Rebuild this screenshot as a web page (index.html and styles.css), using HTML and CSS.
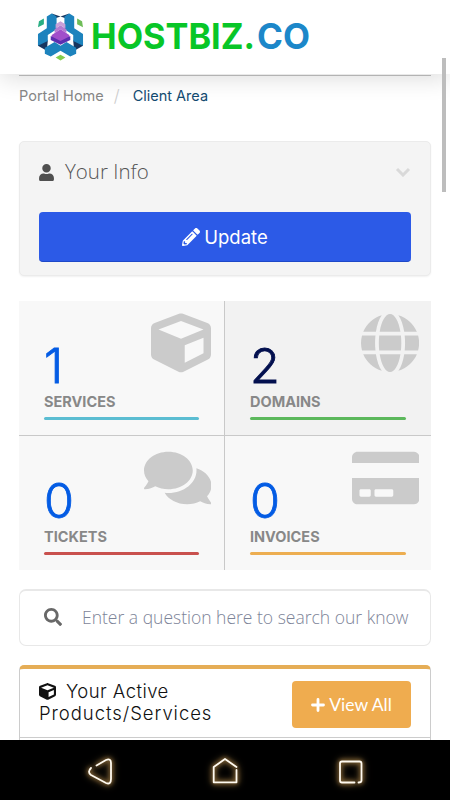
FILE: index.html
```html
<!DOCTYPE html>
<html lang="en">
<head>
<meta charset="utf-8">
<meta name="viewport" content="width=device-width, initial-scale=1">
<title>Client Area</title>
<link rel="stylesheet" href="styles.css">
</head>
<body>
<div class="screen">
  <header class="topbar">
    <svg class="mark" viewBox="0 0 48 50">
      <path fill="#17365f" d="M15 1l9 3 9-3-3 5-6-2-6 2zM1 29l8-4 2 4-1 10-9-5zM47 29l-8-4-2 4 1 10 9-5z"/>
      <path fill="#1d83bd" d="M15 1l5 3v13l-9 6v6l-10 5V22l9-6V4zM33 1l-5 3v13l9 6v6l10 5V22l-9-6V4zM8 36l10-6 6 4 6-4 10 6v6l-6 3-10-6-10 6-6-3z"/>
      <path fill="#c9a0d8" d="M24 9l5 3v4l-5-3-5 3v-4z"/>
      <path fill="#b57bd0" d="M24 13l6 4v4l-6-4-6 4v-4z"/>
      <path fill="#a14fca" d="M24 17l9 6v3l-9 5-9-5v-3z"/>
      <path fill="#5c2fb0" d="M14 24l10 5 10-5v4l-10 5-10-5z"/>
      <path fill="#29af83" d="M2 9l5-3v6l-6 3z"/>
      <path fill="#6fbd59" d="M41 6l5 3 1 6-6-3z"/>
      <path fill="#83cc4d" d="M24 43l5 3-5 3-5-3z"/>
    </svg>
    <svg class="wordmark" viewBox="0 0 220 40">
      <text class="word-host" x="-1" y="29" textLength="164" lengthAdjust="spacingAndGlyphs">HOSTBIZ.</text>
      <text class="word-co" x="165" y="29" textLength="53" lengthAdjust="spacingAndGlyphs">CO</text>
    </svg>
  </header>

  <main class="content">
    <nav class="crumbs">
      <span class="crumb">Portal Home</span><span class="sep">/</span><span class="crumb current">Client Area</span>
    </nav>

    <section class="info">
      <div class="info-head">
        <svg class="user" viewBox="0 0 448 512"><path d="M224 256c70.7 0 128-57.3 128-128S294.700 0 224 0 96 57.300 96 128s57.300 128 128 128zm89.600 32h-16.700c-22.200 10.200-46.900 16-72.900 16s-50.600-5.800-72.900-16h-16.700C60.200 288 0 348.200 0 422.400V464c0 26.500 21.500 48 48 48h352c26.500 0 48-21.500 48-48v-41.600c0-74.200-60.200-134.400-134.400-134.400z"/></svg>
        <h2>Your Info</h2>
        <svg class="chevron" viewBox="0 0 16 10"><path d="M2 2l6 6 6-6"/></svg>
      </div>
      <button class="update">
        <svg class="pencil" viewBox="0 0 512 512"><path d="M497.900 142.100l-46.100 46.100c-4.700 4.700-12.300 4.700-17 0l-111-111c-4.700-4.700-4.700-12.300 0-17l46.100-46.100c18.700-18.700 49.100-18.700 67.900 0l60.100 60.100c18.800 18.700 18.800 49.100 0 67.900zM284.200 99.800L21.600 362.400.4 483.900c-2.900 16.400 11.400 30.600 27.800 27.800l121.500-21.300 262.600-262.600c4.700-4.700 4.700-12.300 0-17l-111-111c-4.800-4.700-12.400-4.700-17.100 0zM124.100 339.900c-5.500-5.500-5.500-14.300 0-19.800l154-154c5.500-5.500 14.300-5.500 19.800 0s5.500 14.300 0 19.800l-154 154c-5.500 5.500-14.300 5.500-19.800 0zM88 424h48v36.300l-64.500 11.300-31.100-31.100L51.700 376H88v48z"/></svg>
        <span>Update</span>
      </button>
    </section>

    <section class="tiles">
      <div class="tile services">
        <svg viewBox="0 0 512 512"><path d="M239.100 6.300l-208 78c-18.700 7-31.100 25-31.100 45v225.100c0 18.200 10.300 34.800 26.500 42.900l208 104c13.500 6.800 29.400 6.800 42.900 0l208-104c16.300-8.100 26.500-24.800 26.500-42.900V129.300c0-20-12.400-37.900-31.100-44.900l-208-78C262 2.200 250 2.200 239.100 6.300zM256 68.400l192 72v1.100l-192 78-192-78v-1.100l192-72zm32 356V275.500l160-65v133.900l-160 80z"/></svg>
        <div class="count">1</div><div class="label">SERVICES</div><div class="bar"></div>
      </div>
      <div class="tile domains">
        <svg viewBox="0 0 496 512"><path d="M336.500 160C322 70.700 287.800 8 248 8s-74 62.700-88.500 152h177zM152 256c0 22.200 1.200 43.500 3.300 64h185.300c2.100-20.500 3.300-41.800 3.300-64s-1.200-43.500-3.300-64H155.300c-2.100 20.500-3.300 41.800-3.300 64zm324.700-96c-28.600-67.900-86.500-120.400-158-141.600 24.400 33.800 41.200 84.700 50 141.600h108zM177.200 18.400C105.800 39.600 47.800 92.100 19.300 160h108c8.700-56.900 25.500-107.800 49.900-141.600zM487.400 192H372.700c2.100 21 3.300 42.500 3.300 64s-1.200 43-3.300 64h114.600c5.500-20.500 8.600-41.800 8.600-64s-3.100-43.500-8.500-64zM120 256c0-21.500 1.200-43 3.300-64H8.600C3.200 212.500 0 233.800 0 256s3.200 43.500 8.600 64h114.600c-2-21-3.200-42.500-3.200-64zm39.500 96c14.500 89.300 48.700 152 88.500 152s74-62.700 88.500-152h-177zm159.300 141.600c71.400-21.200 129.400-73.700 158-141.600h-108c-8.800 56.900-25.600 107.800-50 141.600zM19.300 352c28.600 67.900 86.500 120.400 158 141.600-24.400-33.800-41.200-84.700-50-141.600h-108z"/></svg>
        <div class="count">2</div><div class="label">DOMAINS</div><div class="bar"></div>
      </div>
      <div class="tile tickets">
        <svg viewBox="0 0 576 512"><path d="M416 192c0-88.400-93.100-160-208-160S0 103.600 0 192c0 34.300 14.100 65.900 38 92-13.400 30.200-35.500 54.200-35.800 54.500-2.200 2.300-2.800 5.700-1.500 8.700S4.800 352 8 352c36.600 0 66.900-12.300 88.700-25 32.200 15.700 70.300 25 111.300 25 114.900 0 208-71.600 208-160zm122 220c23.900-26 38-57.700 38-92 0-66.900-53.500-124.200-129.300-148.100.9 6.600 1.300 13.300 1.300 20.100 0 105.900-107.700 192-240 192-10.800 0-21.300-.8-31.700-1.900C207.800 439.600 281.800 480 368 480c41 0 79.100-9.200 111.300-25 21.800 12.700 52.100 25 88.700 25 3.200 0 6.100-1.900 7.300-4.800 1.300-2.900.7-6.300-1.500-8.700-.3-.3-22.400-24.200-35.800-54.500z"/></svg>
        <div class="count">0</div><div class="label">TICKETS</div><div class="bar"></div>
      </div>
      <div class="tile invoices">
        <svg viewBox="0 0 576 512"><path d="M0 432c0 26.500 21.500 48 48 48h480c26.500 0 48-21.500 48-48V256H0v176zm192-68c0-6.600 5.400-12 12-12h136c6.600 0 12 5.400 12 12v40c0 6.600-5.400 12-12 12H204c-6.600 0-12-5.400-12-12v-40zm-128 0c0-6.600 5.400-12 12-12h72c6.600 0 12 5.400 12 12v40c0 6.600-5.400 12-12 12H76c-6.600 0-12-5.400-12-12v-40zM576 80v48H0V80c0-26.500 21.500-48 48-48h480c26.500 0 48 21.500 48 48z"/></svg>
        <div class="count">0</div><div class="label">INVOICES</div><div class="bar"></div>
      </div>
    </section>

    <div class="search">
      <svg viewBox="0 0 512 512"><path d="M505 442.700L405.300 343c-4.500-4.500-10.600-7-17-7H372c27.600-35.300 44-79.700 44-128C416 93.100 322.900 0 208 0S0 93.100 0 208s93.100 208 208 208c48.300 0 92.700-16.400 128-44v16.300c0 6.400 2.500 12.500 7 17l99.700 99.700c9.400 9.400 24.600 9.400 33.900 0l28.300-28.300c9.400-9.400 9.400-24.600.1-34zM208 336c-70.700 0-128-57.200-128-128 0-70.700 57.200-128 128-128 70.700 0 128 57.200 128 128 0 70.700-57.200 128-128 128z"/></svg>
      <span>Enter a question here to search our know</span>
    </div>

    <section class="products">
      <div class="products-head">
        <h2>
          <span class="line"><svg viewBox="0 0 512 512"><path d="M239.100 6.300l-208 78c-18.700 7-31.100 25-31.100 45v225.100c0 18.200 10.300 34.800 26.500 42.900l208 104c13.500 6.800 29.400 6.800 42.900 0l208-104c16.300-8.100 26.500-24.800 26.500-42.900V129.300c0-20-12.400-37.900-31.100-44.900l-208-78C262 2.200 250 2.200 239.100 6.300zM256 68.400l192 72v1.100l-192 78-192-78v-1.100l192-72zm32 356V275.500l160-65v133.900l-160 80z"/></svg>Your Active</span>
          <span class="line line-two">Products/Services</span>
        </h2>
        <button class="view"><svg viewBox="0 0 14 14"><path d="M7 1.500v11M1.500 7h11"/></svg><span>View All</span></button>
      </div>
    </section>
  </main>

  <footer class="navbar">
    <svg viewBox="0 0 40 40"><path d="M16.500 13.500L26 8q5-2 5 3v16q0 6-5 4L11 23q-4-3 0-7"/></svg>
    <svg viewBox="0 0 40 40"><path d="M31.500 15L20 7 8.700 15v15.300h22.800V18"/></svg>
    <svg viewBox="0 0 40 40"><path d="M24.500 30.500H12q-2 0-2-2v-17q0-2 2-2h17.500q2 0 2 2v17q0 2-3 2"/></svg>
  </footer>
  <div class="scrollbar"></div>
</div>
</body>
</html>
```
FILE: styles.css
```css
* { box-sizing: border-box; }
body { margin: 0; background: #fff; font-family: Inter, "Open Sans", sans-serif; }
svg { display: block; flex: none; }
h2 { margin: 0; font-weight: 300; }
button { border: 0; padding: 0; font: inherit; color: #fff; display: flex; align-items: center; justify-content: center; }

.screen { position: relative; display: flex; flex-direction: column; height: 800px; overflow: hidden; }
.topbar { flex: none; display: flex; height: 74px; padding: 12px 0 0 37px; background: #fff; box-shadow: 0 4px 24px rgba(0, 0, 0, .14); }
.mark { width: 47px; height: 50px; }
.wordmark { width: 220px; height: 40px; margin: 8px 0 0 8px; overflow: visible; }
.wordmark text { font: 700 36px Inter, sans-serif; }
.word-host { fill: #08c627; }
.word-co { fill: #1c87c9; }

.content { flex: 1; min-height: 0; padding: 0 19px; overflow: hidden; position: relative; }
.crumbs { display: flex; align-items: center; height: 43px; margin-top: 1px; padding-bottom: 3px; border-top: 1px solid #b3b3b3; font-size: 14.500px; color: #858585; }
.sep { margin: 0 13px 0 10px; color: #ccc; font-size: 17px; font-weight: 300; }
.current { color: #124a70; }

.info { height: 135px; margin-top: 23px; padding: 16px 19px 0; background: #f4f4f4; border: 1px solid #ebebeb; border-radius: 5px; box-shadow: 0 1px 2px rgba(0, 0, 0, .06); }
.info-head { display: flex; align-items: center; height: 26px; }
.user { width: 15px; height: 17px; margin-top: 2px; fill: #505050; }
.info-head h2 { flex: 1; margin-left: 11px; font: 300 20.500px/26px "Open Sans", sans-serif; color: #555; }
.chevron { width: 16px; height: 10px; margin-top: 2px; fill: none; stroke: #d9d9d9; stroke-width: 3; }
.update { width: 100%; height: 50px; margin-top: 28px; background: #2c5ae7; border-radius: 4px; border-bottom: 1px solid #1e48c8; font-size: 18.500px; }
.pencil { width: 18px; height: 18px; margin-right: 4px; fill: #fff; }

.tiles { display: grid; grid-template-columns: 206px 206px; grid-template-rows: 135px 134px; margin-top: 25px; }
.tile { position: relative; padding: 39px 25px 0; background: #f8f8f8; }
.tile svg { position: absolute; top: 12px; right: 12px; height: 60px; fill: #cbcbcb; }
.services, .tickets { border-right: 1px solid #c9c9c9; }
.services svg, .tickets svg { right: 13px; }
.services, .domains { border-bottom: 1px solid #c9c9c9; }
.domains { background: #f2f2f2; }
.count { height: 52px; font-size: 48.500px; line-height: 52px; font-weight: 300; -webkit-text-stroke: .8px currentColor; color: #045ce4; }
.domains .count { color: #03104f; }
.label { height: 18px; font-size: 14.500px; line-height: 20px; font-weight: 700; color: #888; }
.bar { height: 3px; margin-top: 7px; border-radius: 2px; background: #5bbdd2; }
.domains .bar { background: #5cb85c; }
.tickets .bar { background: #c9514e; }
.invoices .bar { background: #edae51; }

.search { display: flex; align-items: center; height: 57px; margin-top: 19px; padding-left: 24px; border: 1px solid #e8e8e8; border-top-width: 2px; border-radius: 7px; font: 300 17.500px "Open Sans", sans-serif; color: #7d8498; }
.search svg { width: 18px; height: 18px; margin: -2px 21px 0 0; fill: #686868; }
.search span { margin: -2px 0 0 -1px; white-space: nowrap; }

.products { height: 120px; margin-top: 19px; border: 1px solid #ccc; border-top: 4px solid #e5ad56; border-radius: 5px; }
.products-head { display: flex; justify-content: space-between; height: 69px; padding: 12px 19px 0; border-bottom: 1px solid #ccc; }
.products h2 { margin-top: -1px; font: 300 18.500px/22px Inter, sans-serif; color: #111; white-space: nowrap; letter-spacing: .45px; }
.line { display: flex; align-items: center; height: 22px; }
.line-two { letter-spacing: .95px; }
.line svg { width: 17px; height: 17px; margin-right: 10px; fill: #111; }
.view { width: 119px; height: 47px; background: #efac4f; border-radius: 4px; font: 400 17.500px Lato, sans-serif; }
.view svg { width: 14px; height: 14px; margin-right: 4px; fill: none; stroke: #fff; stroke-width: 2.800; stroke-linecap: round; }

.navbar { flex: none; display: flex; justify-content: center; gap: 85px; height: 60px; padding-top: 12px; background: #000; position: relative; }
.navbar svg { width: 40px; height: 40px; fill: none; stroke: #fffaf0; stroke-width: 1.800; stroke-linecap: round; stroke-linejoin: round; filter: drop-shadow(0 0 2px #b58b4b) drop-shadow(0 0 3px #94713c); overflow: visible; }
.scrollbar { position: absolute; top: 58px; right: 4px; width: 4px; height: 134px; background: #bdbdbd; }
```
